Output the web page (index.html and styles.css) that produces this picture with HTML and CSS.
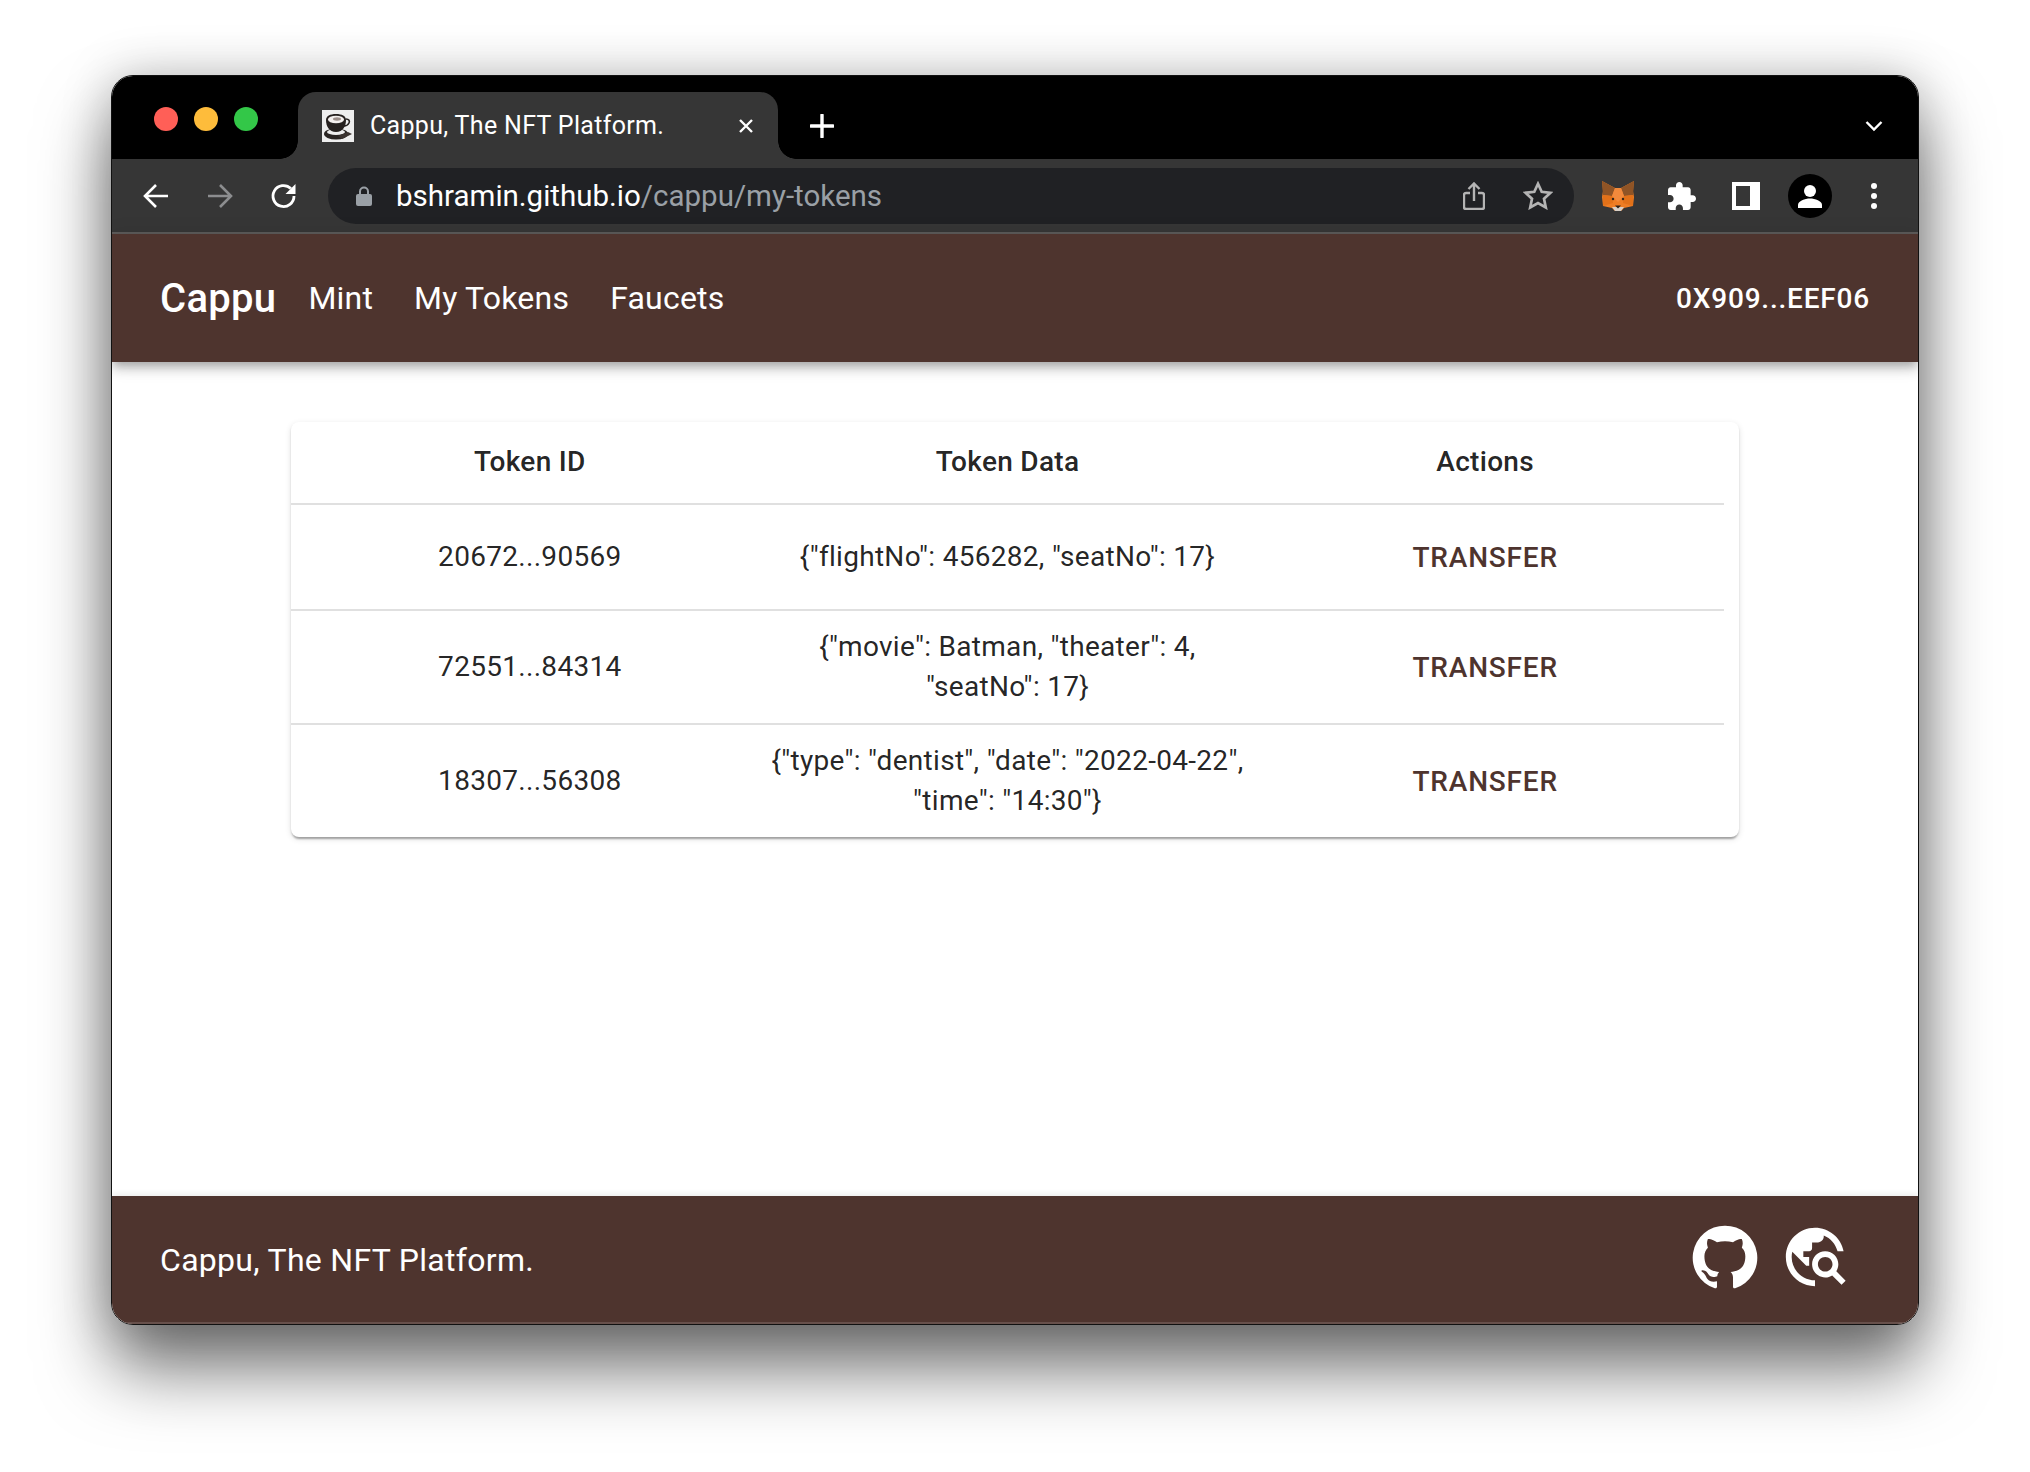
FILE: index.html
```html
<!DOCTYPE html>
<html lang="en">
<head>
  <meta charset="UTF-8" />
  <title>Cappu, The NFT Platform.</title>
  <link rel="stylesheet" href="styles.css">
</head>
<body>

<div class="window">
  <div class="titlebar">
    <div class="lights">
      <span class="light red"></span>
      <span class="light yellow"></span>
      <span class="light green"></span>
    </div>
    <div class="tab">
      <svg class="favicon" viewBox="0 0 32 32">
        <rect width="32" height="32" fill="#eeeeee"/>
        <ellipse cx="14" cy="24" rx="12" ry="5.500" fill="#2a2523"/>
        <ellipse cx="14" cy="22" rx="9" ry="3" fill="#eeeeee"/>
        <path d="M4 10c0-4 4-6 10-6s10 2 10 6c0 6-3 12-10 12S4 16 4 10z" fill="#26211f"/>
        <ellipse cx="14" cy="9.500" rx="8" ry="3.800" fill="#f4f0ee"/>
        <ellipse cx="15" cy="9" rx="4" ry="1.700" fill="#9c8f8a"/>
        <path d="M24 9c3 0 4 2 3 4s-3 3-5 3" fill="none" stroke="#26211f" stroke-width="1.600"/>
        <path d="M16 26l10-4 4 2-10 5z" fill="#3b3330"/>
      </svg>
      <span class="tab-title">Cappu, The NFT Platform.</span>
      <svg class="tab-close" viewBox="0 0 16 16"><path d="M2 2l12 12M14 2L2 14" stroke="#fff" stroke-width="2.400" fill="none"/></svg>
    </div>
    <svg class="new-tab" viewBox="0 0 24 24"><path d="M12 1v22M1 12h22" stroke="#fff" stroke-width="3.400" stroke-linecap="round" fill="none"/></svg>
    <svg class="tab-menu" viewBox="0 0 18 12"><path d="M1.500 2l7.500 7.500L16.500 2" stroke="#fff" stroke-width="2.400" fill="none"/></svg>
  </div>

  <div class="toolbar">
    <svg class="nav-icon" viewBox="0 0 28 28"><path d="M26 14H3M14 3L3 14l11 11" stroke="#fff" stroke-width="2.600" fill="none"/></svg>
    <svg class="nav-icon" viewBox="0 0 28 28"><path d="M2 14h23M14 3l11 11-11 11" stroke="#8c8d8f" stroke-width="2.600" fill="none"/></svg>
    <svg class="nav-icon" viewBox="0 0 28 28"><path d="M24 14a10.500 10.500 0 1 1-3.100-7.400" stroke="#fff" stroke-width="2.800" fill="none"/><path d="M25.500 2v10h-10z" fill="#fff"/></svg>
    <div class="omnibox">
      <svg class="lock" viewBox="0 0 16 20"><path d="M4 9V5.500a4 4 0 0 1 8 0V9" stroke="#9aa0a6" stroke-width="2" fill="none"/><rect y="8" width="16" height="12" rx="2" fill="#9aa0a6"/></svg>
      <span class="url">bshramin.github.io<span class="url-path">/cappu/my-tokens</span></span>
      <svg class="share" viewBox="0 0 22 28"><path d="M7 11H3a2 2 0 0 0-2 2v12a2 2 0 0 0 2 2h16a2 2 0 0 0 2-2V13a2 2 0 0 0-2-2h-4M11 19V2M5.500 7L11 1.500 16.500 7" stroke="#b4b4b4" stroke-width="2.400" fill="none"/></svg>
      <svg class="star" viewBox="0 0 30 29"><path d="M15 2.800l3.700 8 8.800 1-6.500 6 1.800 8.700-7.800-4.400-7.800 4.400 1.800-8.700-6.500-6 8.800-1z" stroke="#b4b4b4" stroke-width="2.700" fill="none"/></svg>
    </div>
    <div class="extensions">
      <svg class="fox" viewBox="0 0 32 30">
        <path d="M0 0l13 7h6L32 0l-1 10 1 6-1 9-9 2-3 3h-6l-3-3-9-2-1-9 1-6z" fill="#ee7d24"/>
        <path d="M0 0l13 7-3 8-9-1z" fill="#8f5426"/>
        <path d="M32 0L19 7l3 8 9-1z" fill="#8f5426"/>
        <path d="M13 7h6l3 8-6 6-6-6z" fill="#f28a3c"/>
        <path d="M1 14l9 1 1 7-10 3z" fill="#e27119"/>
        <path d="M31 14l-9 1-1 7 10 3z" fill="#e27119"/>
        <circle cx="11" cy="18" r="1.200" fill="#33241a"/>
        <circle cx="21" cy="18" r="1.200" fill="#33241a"/>
        <path d="M10 26h12l-3 4h-6z" fill="#d8cfc6"/>
        <path d="M13 24.500h6l-3 3z" fill="#2b211b"/>
      </svg>
      <svg class="puzzle" viewBox="2 1 21 21"><path d="M20.500 11H19V7c0-1.100-.9-2-2-2h-4V3.500C13 2.120 11.880 1 10.500 1S8 2.120 8 3.500V5H4c-1.100 0-1.990.9-1.990 2v3.800H3.500c1.490 0 2.700 1.210 2.700 2.700s-1.210 2.700-2.700 2.700H2V20c0 1.100.9 2 2 2h3.800v-1.500c0-1.490 1.210-2.700 2.700-2.700 1.490 0 2.700 1.210 2.700 2.700V22H17c1.100 0 2-.9 2-2v-4h1.500c1.380 0 2.500-1.120 2.500-2.500S21.880 11 20.500 11z" fill="#fff"/></svg>
      <span class="sidepanel"></span>
      <svg class="profile" viewBox="0 0 44 44"><circle cx="22" cy="22" r="22" fill="#000"/><circle cx="22" cy="17" r="6" fill="#fff"/><path d="M10 34v-3c0-4 7-6.500 12-6.500S34 27 34 31v3z" fill="#fff"/></svg>
      <span class="dots"><i></i><i></i><i></i></span>
    </div>
  </div>

  <header class="appbar">
    <span class="brand">Cappu</span>
    <nav class="nav">
      <a>Mint</a>
      <a>My Tokens</a>
      <a>Faucets</a>
    </nav>
    <span class="account">0X909...EEF06</span>
  </header>

  <main class="content">
    <div class="paper">
      <table class="tokens">
        <thead>
          <tr><th>Token ID</th><th>Token Data</th><th>Actions</th></tr>
        </thead>
        <tbody>
          <tr>
            <td>20672...90569</td>
            <td>{"flightNo": 456282, "seatNo": 17}</td>
            <td><button class="transfer">Transfer</button></td>
          </tr>
          <tr>
            <td>72551...84314</td>
            <td>{"movie": Batman, "theater": 4, "seatNo": 17}</td>
            <td><button class="transfer">Transfer</button></td>
          </tr>
          <tr>
            <td>18307...56308</td>
            <td>{"type": "dentist", "date": "2022-04-22", "time": "14:30"}</td>
            <td><button class="transfer">Transfer</button></td>
          </tr>
        </tbody>
      </table>
    </div>
  </main>

  <footer class="footer">
    <span class="footer-text">Cappu, The NFT Platform.</span>
    <div class="footer-icons">
      <svg class="footer-icon" viewBox="0 0 24 24"><path d="M12 1.270a11 11 0 0 0-3.480 21.460c.55.090.73-.28.73-.55v-1.840c-3.030.64-3.670-1.460-3.670-1.460-.55-1.290-1.280-1.650-1.280-1.650-.92-.65.100-.65.100-.65 1.100 0 1.730 1.100 1.730 1.100.92 1.650 2.570 1.200 3.210.92a2 2 0 0 1 .64-1.470c-2.470-.27-5.040-1.190-5.040-5.500 0-1.100.46-2.100 1.200-2.840a3.760 3.760 0 0 1 0-2.930s.91-.28 3.110 1.100c1.800-.49 3.700-.49 5.500 0 2.100-1.380 3.020-1.100 3.020-1.100a3.760 3.760 0 0 1 0 2.930c.83.74 1.200 1.740 1.200 2.940 0 4.210-2.570 5.130-5.040 5.400.45.37.82.92.82 2.020v3.030c0 .27.100.64.73.55A11 11 0 0 0 12 1.270"/></svg>
      <svg class="footer-icon" viewBox="0 0 24 24"><path d="M19.300 16.900c.4-.7.7-1.500.7-2.400 0-2.500-2-4.500-4.500-4.500S11 12 11 14.500s2 4.500 4.500 4.500c.9 0 1.700-.3 2.400-.7l3.200 3.200 1.400-1.400-3.200-3.200zm-3.800.1c-1.400 0-2.500-1.100-2.500-2.500s1.100-2.500 2.500-2.500 2.500 1.100 2.500 2.500-1.100 2.500-2.500 2.500zM12 20v2C6.480 22 2 17.520 2 12S6.480 2 12 2c4.840 0 8.870 3.440 9.800 8h-2.070c-.64-2.460-2.400-4.470-4.730-5.410V5c0 1.100-.9 2-2 2h-2v2c0 .55-.45 1-1 1H8v2h2v3H9l-4.790-4.790C4.080 10.790 4 11.380 4 12c0 4.410 3.590 8 8 8z"/></svg>
    </div>
  </footer>
</div>

</body>
</html>
```

FILE: styles.css
```css
html, body {
  margin: 0;
  height: 100%;
}
body {
  background: #fff;
  padding: 75px 111px 0;
  box-sizing: border-box;
  font-family: Roboto, "Liberation Sans", sans-serif;
  overflow: hidden;
}

.window {
  width: 1808px;
  height: 1250px;
  box-sizing: border-box;
  display: flex;
  flex-direction: column;
  background: #fff;
  border: 1px solid #111;
  border-radius: 22px;
  overflow: hidden;
}
/* the shadow has to sit outside the clipped window */
body::before {
  content: "";
  position: absolute;
  z-index: -1;
  left: 111px;
  top: 75px;
  width: 1808px;
  height: 1250px;
  border-radius: 22px;
  box-shadow: 0 44px 70px rgba(0, 0, 0, 0.55), 0 0 50px rgba(0, 0, 0, 0.22);
}

/* browser chrome */
.titlebar {
  height: 83px;
  flex: none;
  display: flex;
  align-items: flex-end;
  background: #000;
}
.lights {
  width: 186px;
  height: 83px;
  flex: none;
  padding: 31px 0 0 42px;
  box-sizing: border-box;
  display: flex;
  gap: 16px;
}
.light {
  width: 24px;
  height: 24px;
  border-radius: 50%;
}
.red { background: #ff5f57; }
.yellow { background: #febc3b; }
.green { background: #33c748; }

.tab {
  position: relative;
  width: 480px;
  height: 67px;
  flex: none;
  display: flex;
  align-items: center;
  padding: 0 24px 0 24px;
  box-sizing: border-box;
  background: #363636;
  border-radius: 18px 18px 0 0;
}
.tab::before, .tab::after {
  content: "";
  position: absolute;
  bottom: 0;
  width: 18px;
  height: 18px;
}
.tab::before {
  left: -18px;
  background: radial-gradient(circle at 0 0, #000 17.500px, #363636 18px);
}
.tab::after {
  right: -18px;
  background: radial-gradient(circle at 100% 0, #000 17.500px, #363636 18px);
}
.favicon {
  width: 32px;
  height: 32px;
  flex: none;
}
.tab-title {
  flex: 1;
  margin-left: 16px;
  color: #fff;
  font-size: 25px;
  letter-spacing: 0.32px;
  white-space: nowrap;
}
.tab-close {
  width: 16px;
  height: 16px;
  flex: none;
}
.new-tab {
  width: 24px;
  height: 24px;
  margin: 0 0 21px 32px;
  flex: none;
}
.tab-menu {
  width: 18px;
  height: 12px;
  margin: 0 35px 27px auto;
  flex: none;
}

.toolbar {
  height: 75px;
  flex: none;
  box-sizing: border-box;
  display: flex;
  align-items: center;
  padding-left: 30px;
  background: #363636;
  border-bottom: 2px solid #5e5c5b;
}
.nav-icon {
  width: 28px;
  height: 28px;
  flex: none;
  margin-right: 36px;
}
.nav-icon:nth-child(3) {
  margin-right: 30px;
}
.omnibox {
  width: 1246px;
  height: 56px;
  flex: none;
  display: flex;
  align-items: center;
  padding-left: 28px;
  box-sizing: border-box;
  background: #202124;
  border-radius: 28px;
}
.lock {
  width: 16px;
  height: 20px;
  flex: none;
}
.url {
  flex: 1;
  margin-left: 24px;
  color: #fff;
  font-size: 29.500px;
  white-space: nowrap;
}
.url-path {
  color: #9aa0a6;
}
.share {
  width: 22px;
  height: 28px;
  flex: none;
}
.star {
  width: 30px;
  height: 29px;
  margin: 0 21px 0 38px;
  flex: none;
}
.extensions {
  display: flex;
  align-items: center;
  margin-left: 28px;
}
.fox {
  width: 32px;
  height: 30px;
  flex: none;
}
.puzzle {
  width: 28px;
  height: 28px;
  margin-left: 34px;
  flex: none;
}
.sidepanel {
  width: 28px;
  height: 28px;
  margin-left: 36px;
  flex: none;
  box-sizing: border-box;
  background: #363636;
  border: solid #fff;
  border-width: 4px 10px 4px 4px;
}
.profile {
  width: 44px;
  height: 44px;
  margin-left: 28px;
  flex: none;
}
.dots {
  display: flex;
  flex-direction: column;
  gap: 4px;
  margin-left: 39px;
}
.dots i {
  width: 6px;
  height: 6px;
  background: #fff;
  border-radius: 50%;
}

/* app */
.appbar {
  height: 128px;
  flex: none;
  display: flex;
  align-items: center;
  padding: 0 48px;
  color: #fff;
  background: #4e342e;
  box-shadow: 0 4px 8px -2px rgba(0, 0, 0, 0.2), 0 8px 10px 0 rgba(0, 0, 0, 0.14), 0 2px 20px 0 rgba(0, 0, 0, 0.12);
}
.brand {
  font-size: 40px;
  font-weight: 500;
  letter-spacing: 0.3px;
}
.nav {
  display: flex;
  gap: 41px;
  margin-left: 32px;
  font-size: 32px;
  letter-spacing: 0.2px;
}
.account {
  margin-left: auto;
  font-size: 28px;
  font-weight: 500;
  letter-spacing: 0.8px;
}

.content {
  flex: 1;
  padding: 60px 179px 0;
}
.paper {
  padding-right: 15px;
  background: #fff;
  border-radius: 8px;
  box-shadow: 0 4px 2px -2px rgba(0, 0, 0, 0.2), 0 2px 2px 0 rgba(0, 0, 0, 0.14), 0 2px 6px 0 rgba(0, 0, 0, 0.12);
}
.tokens {
  width: 100%;
  table-layout: fixed;
  border-collapse: collapse;
  color: rgba(0, 0, 0, 0.87);
  font-size: 28px;
  letter-spacing: 0.3px;
  text-align: center;
}
.tokens th {
  padding: 15px 0 17px;
  line-height: 49px;
  font-weight: 500;
  border-bottom: 2px solid #e0e0e0;
}
.tokens td {
  padding: 16px 0;
  line-height: 40px;
  border-bottom: 2px solid #e0e0e0;
}
.tokens tr:last-child td {
  border-bottom: 0;
}
.transfer {
  height: 72px;
  padding: 0;
  color: #4e342e;
  background: none;
  border: 0;
  font: 500 28px Roboto, "Liberation Sans", sans-serif;
  letter-spacing: 0.8px;
  text-transform: uppercase;
}

.footer {
  height: 128px;
  flex: none;
  display: flex;
  align-items: center;
  padding: 0 48px;
  box-sizing: border-box;
  color: #fff;
  background: #4e342e;
  box-shadow: inset 0 -2px 0 rgba(255, 255, 255, 0.14), 0 -2px 6px rgba(0, 0, 0, 0.08);
}
.footer-text {
  font-size: 32px;
  letter-spacing: 0.3px;
}
.footer-icons {
  display: flex;
  gap: 20px;
  margin: 0 0 6px auto;
  padding-right: 20px;
}
.footer-icon {
  width: 70px;
  height: 70px;
  fill: #fff;
}
```
